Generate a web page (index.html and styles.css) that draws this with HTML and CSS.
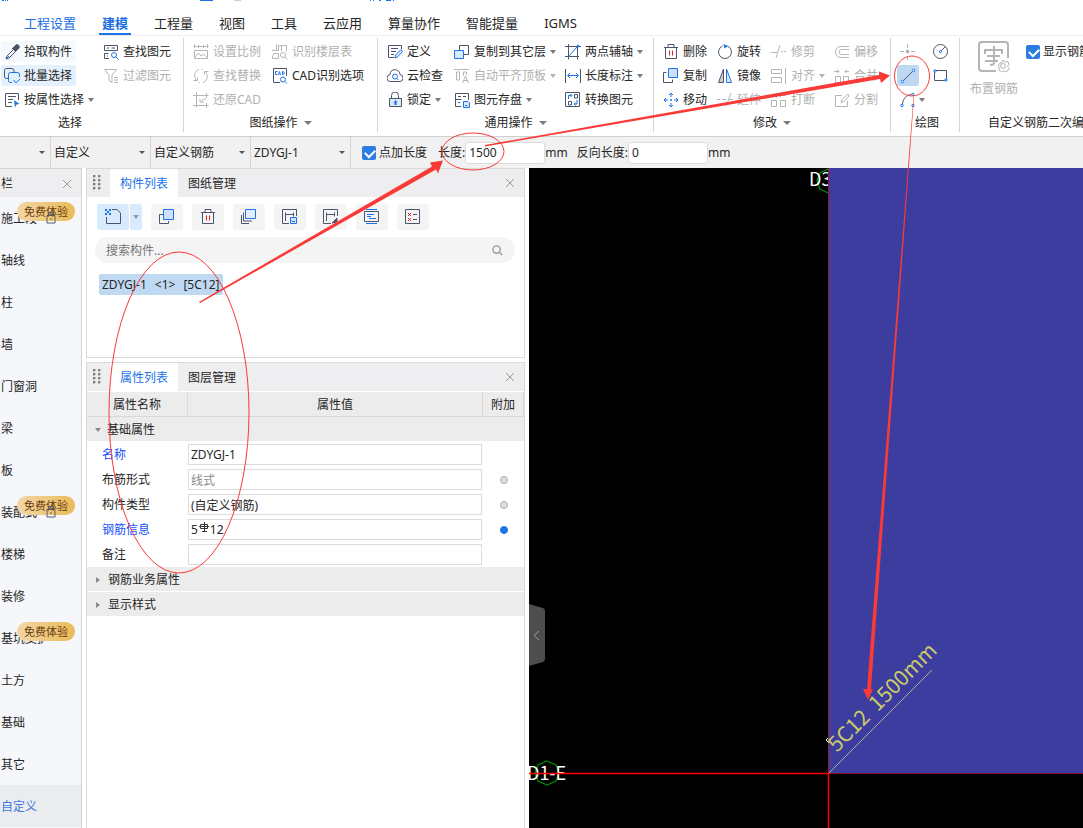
FILE: index.html
```html
<!DOCTYPE html>
<html lang="zh-CN">
<head>
<meta charset="utf-8">
<title>建模</title>
<link rel="stylesheet" href="styles.css">
</head>
<body>
<div class="app">
  <header class="top">
    <svg class="titlebits" width="400" height="3" aria-hidden="true"><path fill="#1a73e8" d="M2 0h2v1H2zM5 0h1v1H5zM7 0h1v1H7zM200 0h13v1h-13zM370 0h1v1h-1zM373 0h1v1h-1zM379 0h2v1h-2zM386 0h5v1h-5zM393 0h1v1h-1z"/><path fill="#ccc" d="M234 0h7v1h-7z"/></svg>
    <nav class="tabs">
      <button class="tab tab-link">工程设置</button>
      <button class="tab tab-on">建模</button>
      <button class="tab">工程量</button>
      <button class="tab">视图</button>
      <button class="tab">工具</button>
      <button class="tab">云应用</button>
      <button class="tab">算量协作</button>
      <button class="tab">智能提量</button>
      <button class="tab">IGMS</button>
    </nav>
  </header>

  <div class="ribbon">
    <section class="group g-select">
      <div class="cmds">
        <button class="cmd cmd-soft"><svg class="ico" viewBox="0 0 16 16"><path d="M8 4l4 4M9 6l-6 6-1 3 3-1 6-6"/><path d="M9 4l3-3c2-1 4 1 3 3l-3 3z" fill="#4b556b"/><path class="b" d="M2 15l3-3"/></svg>拾取构件</button>
        <button class="cmd cmd-on"><svg class="ico" viewBox="0 0 16 16"><path d="M4 10.500H2.500a2 2 0 0 1-2-2v-6a2 2 0 0 1 2-2H8a2 2 0 0 1 2 2V4"/><path class="b" d="M15.500 9V6.500a2 2 0 0 0-2-2h-7a2 2 0 0 0-2 2v6a2 2 0 0 0 2 2H8M9.500 12l2.500 3L16 11"/></svg>批量选择</button>
        <button class="cmd cmd-menu"><svg class="ico" viewBox="0 0 16 16"><path d="M8 14.500H1.500v-13h13V8M4 4.500h8M4 7.500h5M4 10.500h4"/><path d="M10 8l5.500 4-3 .5-1.500 3z" fill="#1a73e8" stroke="none"/></svg>按属性选择<i class="caret"></i></button>
        <button class="cmd"><svg class="ico" viewBox="0 0 16 16"><path d="M6 14.500H1.500v-5h4M1.500 6.500v-5h13v5H1.500M4 4h2M8.500 4H12M4 12h1"/><circle class="b" cx="11" cy="11" r="2.500"/><path class="b" d="M13 13l2.500 2.500"/></svg>查找图元</button>
        <button class="cmd" disabled><svg class="ico" viewBox="0 0 16 16"><path d="M1.500 1.500h12L9 7v7.500l-3-2V7zM11 9.500h4M11 12h4M11 14.500h4"/></svg>过滤图元</button>
      </div>
      <h2 class="glabel">选择</h2>
    </section>

    <section class="group g-draw">
      <div class="cmds">
        <button class="cmd" disabled><svg class="ico" viewBox="0 0 16 16"><path d="M.5 2.500h15M1.500 0v4M5.500 1v3M10.500 1v3M14.500 0v4M1.500 6.500h13v8h-13zM2 13l3.500-4L8 12l2.500-2 4 4"/></svg>设置比例</button>
        <button class="cmd" disabled><svg class="ico" viewBox="0 0 16 16"><path d="M6 1.500C2 3 0 7 3.500 12.500M.5 12.500h4v-3M10 14.500c4-1.500 6-6 2.500-11M15.500 3.500h-4v3M6 14l1 1M9 1l1 1"/></svg>查找替换</button>
        <button class="cmd" disabled><svg class="ico" viewBox="0 0 16 16"><path d="M0 3.500h15.500M3.500 0v15.500M0 13.500h15.500M13.500 1v5M13.500 11v5M13 7c-2 0-4 1-5 3M7 7v3h4"/></svg>还原CAD</button>
        <button class="cmd" disabled><svg class="ico" viewBox="0 0 16 16"><path d="M4.500 0v6M0 6.500h6.500v-5h8v6M1.500 11V9.500h5v5h-6v-3M9.500 1v6"/><circle cx="11" cy="11" r="2.500"/><path d="M13 13l2.500 2.500"/></svg>识别楼层表</button>
        <button class="cmd"><svg class="ico" viewBox="0 0 16 16"><path d="M8 14.500H1.500v-14h13V8"/><path class="b" d="M5.500 3.500h-2v3h2M6.500 7l1-3.500 1 3.500M10.500 3.500v3c2.500 0 2.500-3 0-3"/><circle class="b" cx="11" cy="11.500" r="2.500"/><path class="b" d="M13 13.500l2 2"/></svg>CAD识别选项</button>
      </div>
      <h2 class="glabel">图纸操作<i class="caret"></i></h2>
    </section>

    <section class="group g-common">
      <div class="cmds">
        <button class="cmd"><svg class="ico" viewBox="0 0 16 16"><path d="M7 13.500H1.500v-12h13V5M4 4.500h7M4 7.500h5M4 10.500h3"/><path class="b" d="M8 14l.5-3L14 5.500l1.500 2L10.500 13z" fill="#dbe9fc"/></svg>定义</button>
        <button class="cmd"><svg class="ico" viewBox="0 0 16 16"><path d="M4 13.500a3.500 3.500 0 0 1-1-7C3 0 12.500 0 13 6.500a3.500 3.500 0 0 1-1 7z"/><circle class="b" cx="8" cy="8.500" r="2.500"/><path class="b" d="M10 10.500l1.500 1.500"/></svg>云检查</button>
        <button class="cmd cmd-menu"><svg class="ico" viewBox="0 0 16 16"><path d="M4.500 6V3.500a3 3 0 0 1 7 0V6"/><path d="M2.500 6.500h12v8h-12z" fill="#dbe9fc"/><path d="M8.500 8l2 2.500h-1V13h-2v-2.500h-1z" fill="#1a73e8" stroke="none"/></svg>锁定<i class="caret"></i></button>
        <button class="cmd cmd-menu"><svg class="ico" viewBox="0 0 16 16"><path d="M5.500 6V1.500h9v9H10"/><path class="b" d="M.5 6.500h9v8h-9z" fill="#dbe9fc"/></svg>复制到其它层<i class="caret"></i></button>
        <button class="cmd cmd-menu" disabled><svg class="ico" viewBox="0 0 16 16"><path d="M0 1.500h15M2.500 4v8h3V4zM9.500 8V4h3v3M8.500 15l3-7 3 7M9.500 12.500h4"/></svg>自动平齐顶板<i class="caret"></i></button>
        <button class="cmd cmd-menu"><svg class="ico" viewBox="0 0 16 16"><path d="M7 14.500H1.500v-13h13V8M1.500 7.500h6M4 4.500h3M9 4.500h3M4 10.500h2"/><path class="b" d="M9.500 9.500h4.500l1.500 1.500v4.500h-6zM11 13.500h2.500" fill="#dbe9fc"/></svg>图元存盘<i class="caret"></i></button>
        <button class="cmd cmd-menu"><svg class="ico" viewBox="0 0 16 16"><path d="M0 2.500h16M0 12.500h14M3.500 0v15.500M12.500 2v13.500"/><path class="b" d="M3 13L13 2"/><circle class="b" cx="13" cy="2" r="1"/></svg>两点辅轴<i class="caret"></i></button>
        <button class="cmd cmd-menu"><svg class="ico" viewBox="0 0 16 16"><path d="M.5 1v14M15.500 1v14"/><path class="b" d="M3 7.500h10M5 5L2.500 7.500 5 10M11 5l2.500 2.500L11 10"/></svg>长度标注<i class="caret"></i></button>
        <button class="cmd"><svg class="ico" viewBox="0 0 16 16"><path d="M.5.5h14v14H.5zM3.500 9.500h3V13h-3zM9.500 2.500h3V6h-3z"/><path class="b" d="M3.500 7V3.500h3M5.500 2L7 3.500 5.500 5M12 8v4H9M10.500 10.500L9 12l1.500 1.500"/></svg>转换图元</button>
      </div>
      <h2 class="glabel">通用操作<i class="caret"></i></h2>
    </section>

    <section class="group g-edit">
      <div class="cmds">
        <button class="cmd"><svg class="ico" viewBox="0 0 16 16"><path d="M1 3.500h14M5 3V.5h6V3M2.500 4v10.500h11V4"/><path class="r" d="M6.500 6.500v5M9.500 6.500v5"/></svg>删除</button>
        <button class="cmd"><svg class="ico" viewBox="0 0 16 16"><path class="b" d="M5.500.5h9v9h-9z" fill="#cfe0fb"/><path d="M3.500 4.500H.5v10h9v-3"/></svg>复制</button>
        <button class="cmd"><svg class="ico b" viewBox="0 0 16 16"><path d="M8 1v4M8 11v4M1 8h4M11 8h4M6 3l2-2 2 2M6 13l2 2 2-2M3 6L1 8l2 2M13 6l2 2-2 2M7 8h2M8 7v2"/></svg>移动</button>
        <button class="cmd"><svg class="ico" viewBox="0 0 16 16"><path d="M10.500 2a6.500 6.500 0 1 1-5 0"/><path d="M6.500 0L11 2 7.500 4.500z" fill="#1a73e8" stroke="none"/></svg>旋转</button>
        <button class="cmd"><svg class="ico" viewBox="0 0 16 16"><path d="M6.500 1v13.500h-5z" fill="#ccc"/><path class="b" d="M9.500 1v13.500h5z" fill="#dbe9fc"/></svg>镜像</button>
        <button class="cmd" disabled><svg class="ico" viewBox="0 0 16 16"><path d="M0 7.500h3M5 7.500h4M14 1L9 14M12 7.500h4"/></svg>延伸</button>
        <button class="cmd" disabled><svg class="ico" viewBox="0 0 16 16"><path d="M0 8.500h6M9 1L5 14M10 7.500h2M13 7.500h2"/></svg>修剪</button>
        <button class="cmd cmd-menu" disabled><svg class="ico" viewBox="0 0 16 16"><path d="M.5 1.500h10v4H.5zM.5 9.500h10v5H.5zM14.500 0v16"/></svg>对齐<i class="caret"></i></button>
        <button class="cmd" disabled><svg class="ico" viewBox="0 0 16 16"><path d="M.5 8.500h5v6h-5zM9.500 8.500h5v6h-5zM0 3.500h5.500v2M15 3.500H9.500v2"/></svg>打断</button>
        <button class="cmd" disabled><svg class="ico" viewBox="0 0 16 16"><path d="M15 2.500H7a5.500 5.500 0 0 0 0 11h8M15 5.500H7.500a2.500 2.500 0 0 0 0 5H15"/></svg>偏移</button>
        <button class="cmd" disabled><svg class="ico" viewBox="0 0 16 16"><path d="M1.500 8.500h5v6h-5zM9.500 8.500h5v6h-5zM0 3.500h5M3 1.500l2 2-2 2M15 3.500h-4M13 1.500l-2 2 2 2"/></svg>合并</button>
        <button class="cmd" disabled><svg class="ico" viewBox="0 0 16 16"><path d="M8 3.500H1.500v11h12V9M7 10.500l1-3L14 2l1 2-5 5.500z"/></svg>分割</button>
      </div>
      <h2 class="glabel">修改<i class="caret"></i></h2>
    </section>

    <section class="group g-shape">
      <div class="cmds">
        <button class="tool" aria-label="点" disabled><svg class="ico" viewBox="0 0 16 16"><path d="M7.500 0v4M7.500 12v4M0 7.500h4M11 7.500h4"/><circle cx="7.500" cy="7.500" r="1.500" fill="#aaa"/></svg></button>
        <button class="tool tool-on" aria-label="直线"><svg class="ico" viewBox="0 0 16 16"><path d="M3 13L13 3"/><circle class="b" cx="2.500" cy="13.500" r="1.300" fill="#fff"/><circle class="b" cx="13.500" cy="2.500" r="1.300" fill="#fff"/></svg></button>
        <button class="tool" aria-label="弧线"><svg class="ico" viewBox="0 0 16 16"><path d="M2.500 12C3 7 6 3 11.500 2.500"/><circle class="b" cx="2" cy="13.500" r="1.200" fill="#fff"/><circle class="b" cx="13" cy="2.500" r="1.200" fill="#fff"/><circle class="b" cx="13" cy="13.500" r="1.200" fill="#fff"/></svg><i class="caret"></i></button>
        <button class="tool" aria-label="圆"><svg class="ico" viewBox="0 0 16 16"><circle cx="7.500" cy="7.500" r="7"/><path d="M8 7l4-4"/><circle class="b" cx="7.500" cy="7.500" r="1.200" fill="#fff"/></svg></button>
        <button class="tool" aria-label="矩形"><svg class="ico" viewBox="0 0 16 16"><path d="M1.500 2.500h12v10h-12z"/><circle class="b" cx="2" cy="3" r="1.200" fill="#fff"/><circle class="b" cx="13" cy="12" r="1.200" fill="#fff"/></svg></button>
      </div>
      <h2 class="glabel">绘图</h2>
    </section>

    <section class="group g-rebar">
      <div class="rebar-row">
        <button class="big" disabled><svg width="32" height="32" viewBox="0 0 32 32"><path stroke-width="2" d="M18 30H4a3 3 0 0 1-3-3V4a3 3 0 0 1 3-3h23a3 3 0 0 1 3 3v13M7 13V9h17v4M9 15h13M7 20h13M16 5v17q0 2-4 2"/><circle cx="25" cy="25" r="2.500"/><path d="M25 19l2 2 3-.5 1 3-1.500 2 1.500 2-2 3-3-.5-2 1-3-2 .5-2-1.500-2 2-3 2-.500z"/></svg>布置钢筋</button>
        <label class="check"><input type="checkbox" checked><span>显示钢筋</span></label>
      </div>
      <h2 class="glabel">自定义钢筋二次编辑</h2>
    </section>
  </div>

  <div class="options">
    <span class="pick pick-short"><select aria-label="楼层"><option></option></select></span>
    <span class="pick"><select aria-label="类别"><option>自定义</option></select></span>
    <span class="pick"><select aria-label="类型"><option>自定义钢筋</option></select></span>
    <span class="pick"><select aria-label="构件"><option>ZDYGJ-1</option></select></span>
    <label class="check check-opt"><input type="checkbox" checked><span>点加长度</span></label>
    <label class="len">长度:<input type="text" value="1500"><span>mm</span></label>
    <label class="len">反向长度:<input type="text" value="0"><span>mm</span></label>
  </div>

  <main class="main">
    <aside class="side">
      <div class="side-head"><span>栏</span><button class="close" aria-label="关闭"><svg viewBox="0 0 10 10"><path d="M1 1l8 8M9 1L1 9"/></svg></button></div>
      <ul class="nav">
        <li><a href="#">施工段</a><em class="badge">免费体验</em><svg class="lock" viewBox="0 0 10 13"><path d="M2.500 4V1.500h5V4M1 4.500h8v7.500H1zM5 7v2"/></svg></li>
        <li><a href="#">轴线</a></li>
        <li><a href="#">柱</a></li>
        <li><a href="#">墙</a></li>
        <li><a href="#">门窗洞</a></li>
        <li><a href="#">梁</a></li>
        <li><a href="#">板</a></li>
        <li><a href="#">装配式</a><em class="badge">免费体验</em><svg class="lock" viewBox="0 0 10 13"><path d="M2.500 4V1.500h5V4M1 4.500h8v7.500H1zM5 7v2"/></svg></li>
        <li><a href="#">楼梯</a></li>
        <li><a href="#">装修</a></li>
        <li><a href="#">基坑支护</a><em class="badge">免费体验</em></li>
        <li><a href="#">土方</a></li>
        <li><a href="#">基础</a></li>
        <li><a href="#">其它</a></li>
        <li class="nav-on"><a href="#">自定义</a></li>
      </ul>
    </aside>

    <div class="panels">
      <section class="panel panel-list">
        <div class="phead">
          <span class="grip"></span>
          <button class="ptab ptab-on">构件列表</button><button class="ptab">图纸管理</button>
          <button class="close" aria-label="关闭"><svg viewBox="0 0 10 10"><path d="M1 1l8 8M9 1L1 9"/></svg></button>
        </div>
        <div class="toolbar">
          <div class="split"><button class="tb tb-new" aria-label="新建"><svg class="ico" viewBox="0 0 16 16"><path d="M7 .5h5L15.500 4v10.500H1.500V8"/><path d="M0 0h2v2H0zM4 0h2v2H4zM2 2h2v2H2zM0 4h2v2H0zM4 4h2v2H4z" fill="#1a73e8" stroke="none"/></svg></button><button class="tb-more" aria-label="更多"><i class="caret"></i></button></div>
          <button class="tb" aria-label="复制"><svg class="ico" viewBox="0 0 16 16"><path d="M4 5.500H.5v9h9V12"/><path class="b" d="M4.500.5h10v10h-10z" fill="#cfe0fb"/></svg></button>
          <button class="tb" aria-label="删除"><svg class="ico" viewBox="0 0 16 16"><path d="M1 3.500h14M5 3V.5h6V3M2.500 4v10.500h11V4"/><path class="r" d="M6.500 6.500v5M9.500 6.500v5"/></svg></button>
          <button class="tb" aria-label="层间复制"><svg class="ico" viewBox="0 0 16 16"><path d="M2.500 3.500v8.500H11M.5 6v8.500H8"/><path class="b" d="M4.500.5h10v9h-10z" fill="#e4effd"/></svg></button>
          <button class="tb" aria-label="存档"><svg class="ico" viewBox="0 0 16 16"><path d="M7 14.500H.5V.5h14V7M3.500 3.500V12M3.500 5.500h8M11.500 3.500v4"/><path class="b" d="M8.500 8.500h6v6h-6zM10 12.500h3" fill="#cfe0fb"/></svg></button>
          <button class="tb" aria-label="提取"><svg class="ico" viewBox="0 0 16 16"><path d="M8 14.500H.5V.5h14V7M3.500 3.500V12M3.500 5.500h8M11.500 3.500v4"/><path d="M9 14l5-5v4z" fill="#4b556b"/></svg></button>
          <button class="tb" aria-label="排列"><svg class="ico" viewBox="0 0 16 16"><path d="M.5 2.500h14v10H.5z"/><path class="b" d="M2 .5h11M2 14.500h11M3 5.500h7M3 7.500h4M5 9.500h7"/></svg></button>
          <button class="tb" aria-label="检查"><svg class="ico" viewBox="0 0 16 16"><path d="M.5.5h14v14H.5zM8 5.500h4M8 10.500h4"/><path class="r" d="M3 4l3 3M6 4L3 7M3 9l3 3M6 9l-3 3"/></svg></button>
        </div>
        <div class="search"><input type="text" placeholder="搜索构件..." aria-label="搜索构件"><svg viewBox="0 0 12 12"><circle cx="5" cy="5" r="4"/><path d="M8 8l3 3"/></svg></div>
        <button class="node"><span>ZDYGJ-1</span><span>&lt;1&gt;</span><span>[5C12]</span></button>
      </section>

      <section class="panel panel-props">
        <div class="phead">
          <span class="grip"></span>
          <button class="ptab ptab-on">属性列表</button><button class="ptab">图层管理</button>
          <button class="close" aria-label="关闭"><svg viewBox="0 0 10 10"><path d="M1 1l8 8M9 1L1 9"/></svg></button>
        </div>
        <table class="props">
          <colgroup><col class="c-name"><col><col class="c-extra"></colgroup>
          <thead><tr><th>属性名称</th><th>属性值</th><th>附加</th></tr></thead>
          <tbody>
            <tr class="sec"><th colspan="3"><i class="tri tri-down"></i>基础属性</th></tr>
            <tr><td class="key"><label for="p1">名称</label></td><td><input id="p1" type="text" value="ZDYGJ-1"></td><td></td></tr>
            <tr><td><label for="p2">布筋形式</label></td><td><input id="p2" class="mute" type="text" value="线式"></td><td><input class="dot" type="radio" name="r2" aria-label="附加"></td></tr>
            <tr><td><label for="p3">构件类型</label></td><td><input id="p3" type="text" value="(自定义钢筋)"></td><td><input class="dot" type="radio" name="r3" aria-label="附加"></td></tr>
            <tr><td class="key"><label for="p4">钢筋信息</label></td><td class="rebar"><input id="p4" type="text" value="5&emsp;12"><svg viewBox="0 0 10 12"><path d="M5.500 0v9M1.500 2.500h7v4h-7zM0 4.500h10M3 9.500h5"/></svg></td><td><input class="dot" type="radio" name="r4" checked aria-label="附加"></td></tr>
            <tr><td><label for="p5">备注</label></td><td><input id="p5" type="text" value=""></td><td></td></tr>
            <tr class="sec"><th colspan="3"><i class="tri"></i>钢筋业务属性</th></tr>
            <tr class="sec"><th colspan="3"><i class="tri"></i>显示样式</th></tr>
          </tbody>
        </table>
      </section>
    </div>

    <div class="canvas">
      <svg class="scene" aria-label="模型视图">
        <g fill="none" stroke="#008c00" stroke-width="1.300"><path d="M299 1l-8 4-3 8 3 8 8 4"/><path d="M18 593l9 4 3 8-3 8-9 4-9-4-3-8 3-8z"/></g>
        <text class="axis" x="280" y="18">D3</text>
        <text class="axis" x="-2" y="612">D1-E</text>
        <rect x="299" y="0" width="100%" height="605" fill="#3d3da0"/>
        <path d="M299.500 0v605" stroke="#a01830" fill="none"/>
        <path d="M299 605.500h2000" stroke="#8c0c24" fill="none"/>
        <path d="M0 605.500h300M299.500 605v2000" stroke="#f00" stroke-width="1.500" fill="none"/>
        <path d="M300 605L403 502" stroke="#b4af9c" fill="none"/>
        <text class="tag" transform="translate(308 585) rotate(-45)">5C12&#160;&#160;1500mm</text>
        <path d="M297 572l2-2M297 572l3 3" stroke="#fff" fill="none"/>
      </svg>
      <button class="handle" aria-label="收起"><svg viewBox="0 0 16 62"><path d="M0 0l14 4q2 1 2 3v48q0 2-2 3L0 62z" fill="#4d4d4d"/><path d="M10 27l-5 4.500 5 4.500" fill="none" stroke="#999"/></svg></button>
    </div>
  </main>

  <svg class="marks" aria-hidden="true">
    <g fill="none" stroke="#f93a37">
      <ellipse cx="179" cy="412.500" rx="70" ry="160.500"/>
      <ellipse cx="473" cy="151.500" rx="31" ry="18.500"/>
      <ellipse cx="912" cy="76" rx="17.500" ry="20"/>
    </g>
    <g fill="#f93a37">
      <path d="M199 302l1 1 236-133.500 2 4 5-13-13 2 2 4z"/>
      <path d="M485 145l0 1.500L880 79l1 4 9-7.500-11-4 0 3.500z"/>
      <path d="M914 97h-.5L867 689h-4l5 11 5-11h-2z"/>
    </g>
  </svg>
</div>
</body>
</html>
```
FILE: styles.css
```css
* { box-sizing: border-box; }
body {
  margin: 0;
  font: 12px/20px "Noto Sans", "Noto Sans CJK SC", sans-serif;
  color: #262626;
  background: #fff;
}
button, input, select { font: inherit; color: inherit; margin: 0; }
button { border: 0; padding: 0; background: none; white-space: nowrap; }
h2 { margin: 0; font: inherit; }
svg { flex: none; }

.app { position: relative; min-height: 100vh; display: flex; flex-direction: column; overflow: hidden; }

.top { height: 36px; border-bottom: 1px solid #ededed; }
.titlebits { display: block; }
.tabs { display: flex; gap: 26px; padding-left: 24px; margin-top: 9px; font-size: 13px; }
.tab { height: 23px; padding-bottom: 1px; }
.tab-link { color: #1a6fe0; }
.tab-on { color: #1a6fe0; font-weight: 700; margin: 0 -3px; padding: 0 3px; border-bottom: 2px solid #1a73e8; }

.ribbon { display: flex; height: 101px; border-bottom: 1px solid #cfcfcf; overflow: hidden; }
.group { display: flex; flex: none; flex-direction: column; margin: 2px 0 4px; padding: 3px 0 0 6px; border-right: 1px solid #d6d6d6; }
.group:last-child { border: 0; flex: 1; }
.cmds { display: grid; grid-template-rows: repeat(3, 21px); grid-auto-flow: column; row-gap: 3px; justify-items: start; }
.g-select { width: 184px; padding-left: 1px; }
.g-select .cmds { grid-template-columns: 99px 80px; }
.g-draw { width: 194px; }
.g-draw .cmds { grid-template-columns: 79px 106px; }
.g-common { width: 276px; }
.g-common .cmds { grid-template-columns: 67px 111px 91px; }
.g-edit { width: 237px; }
.g-edit .cmds { grid-template-columns: 54px 54px 63px 58px; }
.g-shape { width: 69px; }
.g-shape .cmds { grid-template-columns: 33px 24px; }
.cmd { display: flex; align-items: center; gap: 4px; height: 21px; padding: 0 4px 0 3px; border-radius: 2px; line-height: 20px; }
.cmd-soft { background: #f5f9fe; }
.cmd-on { background: #e5f0fd; }
.cmd:disabled, .big:disabled { color: #b0b0b0; }
.ico { width: 16px; height: 16px; fill: none; stroke: #4b556b; }
.ico .b, .ico.b { stroke: #1a73e8; }
.ico .r { stroke: #dd2222; }
:disabled .ico, .big svg { stroke: #b5b5b5; fill: none; }
.caret { flex: none; display: inline-block; border: 3px solid transparent; border-top: 4px solid #7a7a7a; border-bottom: 0; }
:disabled .caret { border-top-color: #b5b5b5; }
.glabel { display: flex; align-items: center; justify-content: center; gap: 6px; margin-top: auto; margin-left: -6px; height: 19px; }
.glabel .caret { border-width: 4px 4px 0; }
.g-select .glabel { margin-left: 0; width: 138px; }
.g-shape .glabel { margin-left: -2px; }
.tool { display: flex; align-items: center; justify-content: center; width: 22px; height: 21px; border-radius: 2px; }
.tool-on { background: #bfd8f2; }
.tool .caret { margin: 0 -9px 0 3px; }
.rebar-row { display: flex; gap: 8px; padding-left: 4px; }
.big { display: flex; flex-direction: column; align-items: center; gap: 6px; align-self: start; }
.g-rebar .glabel { white-space: nowrap; justify-content: start; margin-left: 22px; }
.check { display: flex; align-items: center; gap: 3px; height: 22px; white-space: nowrap; }
.check input { appearance: none; position: relative; width: 14px; height: 14px; border-radius: 2px; background: #2b7de1; }
.check input::after { content: ""; position: absolute; left: 3px; top: 3px; width: 8px; height: 5px; border: solid #fff; border-width: 0 0 2px 2px; transform: rotate(-45deg); }

.options { display: flex; align-items: center; height: 31px; background: #f1f1f2; overflow: hidden; white-space: nowrap; }
.pick { position: relative; width: 100px; height: 31px; border-right: 1px solid #d6d6d6; }
.pick-short { width: 51px; }
.pick select { appearance: none; width: 100%; height: 31px; padding: 0 12px 0 3px; border: 0; background: none; }
.pick::after { content: ""; position: absolute; right: 5px; top: 14px; border: 3px solid transparent; border-top: 3px solid #555; border-bottom: 0; }
.check-opt { margin: 0 11px; }
.len { display: flex; align-items: center; margin-right: 9px; }
.len input { width: 80px; height: 22px; padding: 0 3px; border: 1px solid #dcdcdc; border-radius: 3px; background: #fff; }

.main { flex: 1; display: grid; grid-template-columns: 82px 439px minmax(0, 1fr); gap: 4px; }
.side { border: solid #d4d4d4; border-width: 1px 1px 0 0; background: #f5f7fa; }
.side-head { display: flex; align-items: center; justify-content: space-between; height: 28px; padding: 1px 9px 0 1px; background: #eeeef0; }
.close { display: flex; }
.close svg { width: 10px; height: 10px; stroke: #999; fill: none; }
.nav { margin: 0; padding: 0; list-style: none; }
.nav li { position: relative; height: 42px; padding: 12px 0 0 1px; }
.nav a { color: inherit; text-decoration: none; white-space: nowrap; }
.nav .nav-on { background: #eaecf0; color: #4478dc; }
.badge { position: absolute; left: 17px; top: 5px; height: 19px; padding: 0 7px; border-radius: 10px; background: linear-gradient(90deg, #f3d6a6, #eabb59); color: #6a3b0c; font: 11px/18px "Noto Sans CJK SC", sans-serif; }
.lock { position: absolute; left: 46px; top: 14px; width: 10px; height: 13px; fill: none; stroke: #555c68; }

.panels { display: flex; flex-direction: column; gap: 4px; }
.panel { border: 1px solid #d9d9d9; background: #fff; }
.panel-list { height: 190px; }
.panel-props { flex: 1; border-bottom: 0; }
.phead { display: flex; align-items: stretch; height: 28px; padding: 0 9px 0 6px; background: #eeeef0; }
.panel-props .phead { height: 29px; border-bottom: 1px solid #fff; }
.phead .close { align-items: center; margin-left: auto; }
.grip { align-self: center; width: 8px; height: 16px; margin-right: 9px; background: radial-gradient(circle at 1px 1px, #808080 1px, transparent 2px) 0 0 / 5px 4px; }
.ptab { padding: 1px 10px 0; }
.ptab-on { background: #fff; color: #1a73e8; }
.toolbar { display: flex; gap: 9px; padding: 7px 10px; }
.tb { display: flex; align-items: center; justify-content: center; width: 32px; height: 26px; border-radius: 3px; background: #f4f4f5; }
.split { display: flex; gap: 1px; }
.tb-new, .tb-more { background: #d8eafe; }
.tb-more { width: 12px; border-radius: 0 3px 3px 0; line-height: 0; }
.tb-more .caret { border-top-color: #999; }
.search { display: flex; align-items: center; height: 26px; margin: 0 9px 0 8px; padding: 0 12px 0 11px; border-radius: 13px; background: #f4f4f4; }
.search input { flex: 1; min-width: 0; padding: 1px 0 0; border: 0; background: none; }
.search input::placeholder { color: #777; }
.search svg { width: 11px; height: 11px; fill: none; stroke: #999; stroke-width: 1.5; }
.node { display: flex; gap: 8px; height: 21px; margin: 11px 0 0 12px; padding: 1px 4px 0 3px; border-radius: 2px; background: #c0d9f2; }

.props { width: 437px; table-layout: fixed; border-collapse: separate; border-spacing: 0; }
.c-name { width: 101px; }
.c-extra { width: 41px; }
.props th, .props td { height: 25px; padding: 0; font-weight: 400; }
.props thead th { padding-top: 2px; background: #ececec; border: solid #d9d9d9; border-width: 0 1px 1px 0; }
.props td:first-child { padding-left: 15px; }
.props td:nth-child(2) { padding-right: 1px; }
.props td:last-child { text-align: center; }
.props tr.sec th { padding-top: 2px; background: #ececec; border-bottom: 1px solid #fff; text-align: left; }
.key { color: #1450ff; }
.props input[type="text"] { display: block; width: 100%; height: 21px; padding: 0 2px; border: 1px solid #dcdcdc; background: #fff; }
.props .mute { color: #888; }
.tri { display: inline-block; margin: 0 8px 2px 9px; vertical-align: middle; border: 3px solid transparent; border-left: 4px solid #888; border-right: 0; }
.tri-down { margin: 0 6px 2px 8px; border: 3px solid transparent; border-top: 4px solid #888; border-bottom: 0; }
.dot { appearance: none; display: block; width: 8px; height: 8px; margin: 0 auto; border: 1px solid #aeaeb2; border-radius: 50%; background: #dedee2; }
.dot:checked { border-color: #1a73e8; background: #1a73e8; }
.rebar { position: relative; }
.rebar svg { position: absolute; left: 11px; top: 5px; width: 10px; height: 12px; fill: none; stroke: #333; }

.canvas { position: relative; overflow: hidden; background: #000; }
.scene { position: absolute; inset: 0; width: 100%; height: 100%; }
.axis { font: 18px "Noto Sans CJK SC", sans-serif; fill: #fff; }
.tag { font: 21px "Noto Sans CJK SC", sans-serif; fill: #cccc66; }
.handle { position: absolute; left: 0; top: 436px; width: 16px; height: 62px; }
.handle svg { display: block; width: 16px; height: 62px; }
.marks { position: absolute; inset: 0; width: 100%; height: 100%; pointer-events: none; }
```
